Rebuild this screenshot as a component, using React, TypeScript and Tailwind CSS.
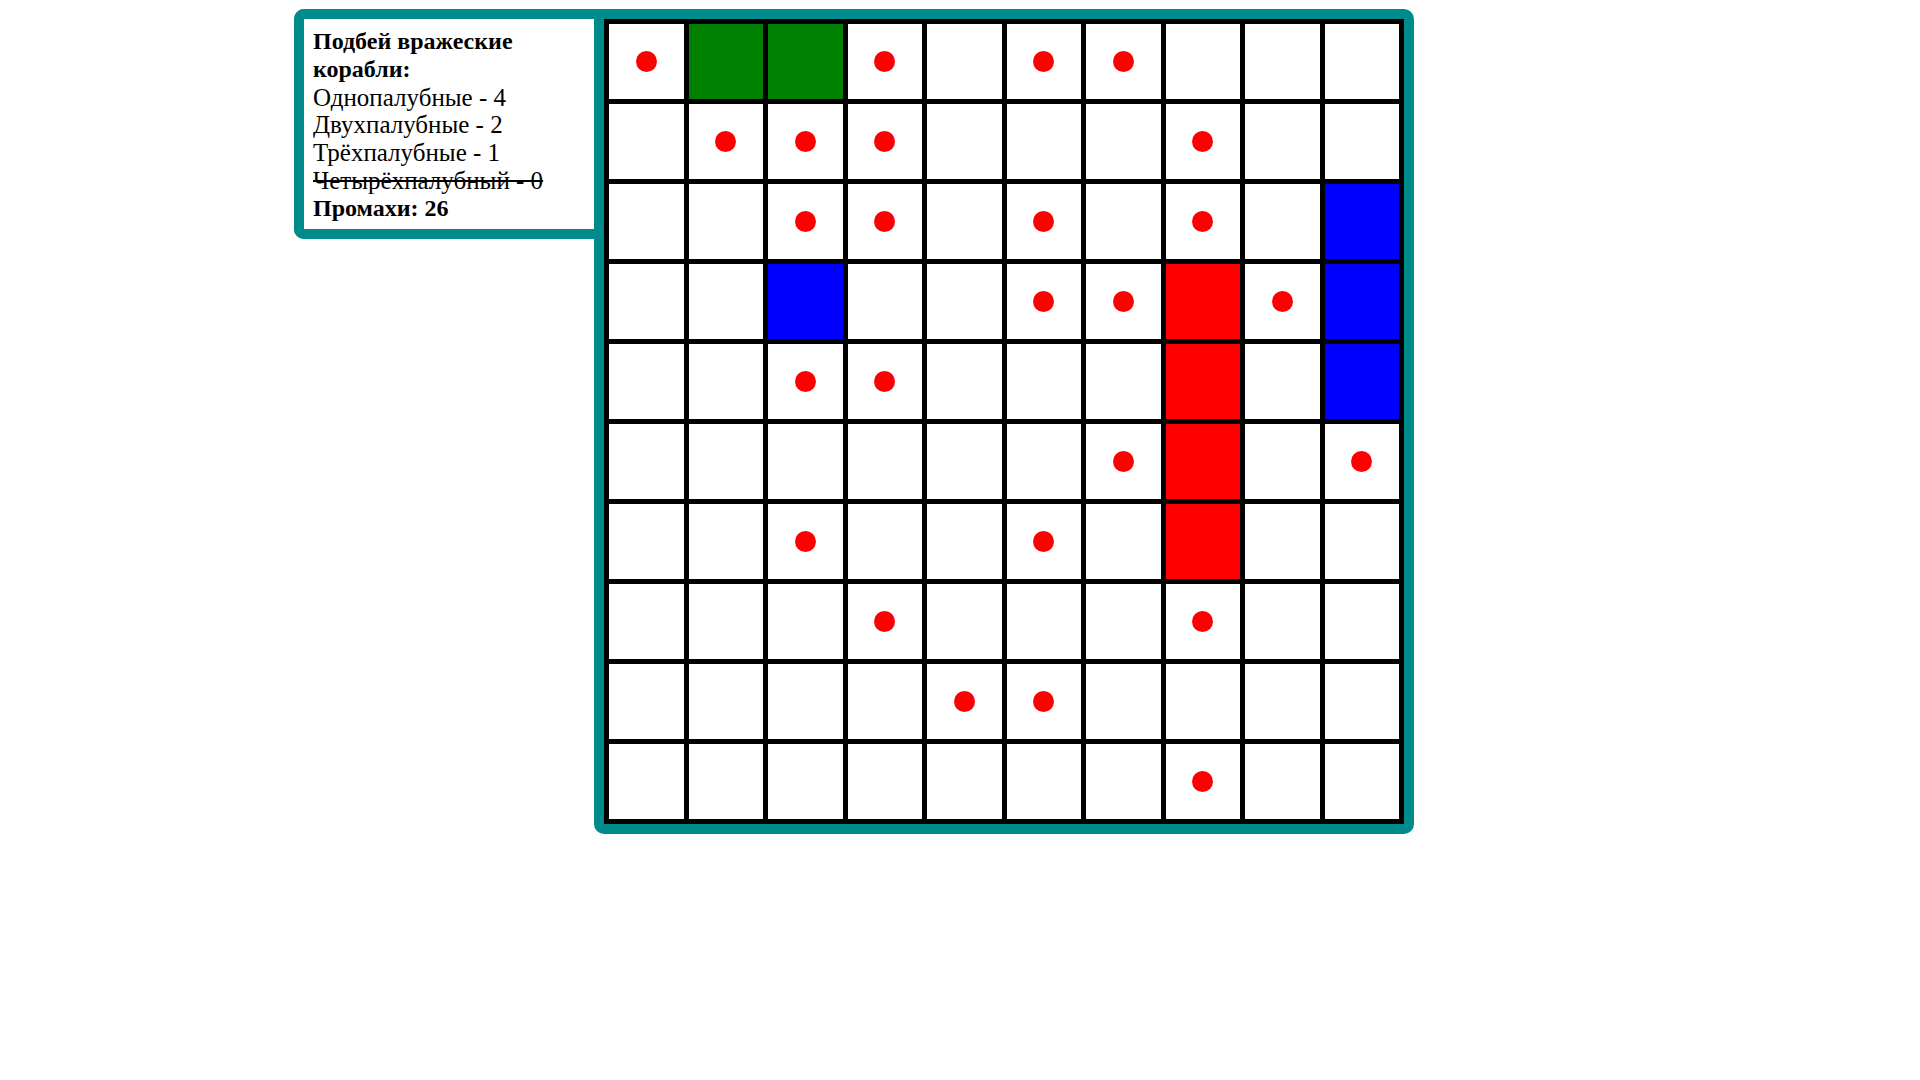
import React from "react"

// 0 пусто, 1 промах, 2 подбит (зелёный), 3 корабль (синий), 4 потоплен (красный)
const board: number[][] = [
  [1, 2, 2, 1, 0, 1, 1, 0, 0, 0],
  [0, 1, 1, 1, 0, 0, 0, 1, 0, 0],
  [0, 0, 1, 1, 0, 1, 0, 1, 0, 3],
  [0, 0, 3, 0, 0, 1, 1, 4, 1, 3],
  [0, 0, 1, 1, 0, 0, 0, 4, 0, 3],
  [0, 0, 0, 0, 0, 0, 1, 4, 0, 1],
  [0, 0, 1, 0, 0, 1, 0, 4, 0, 0],
  [0, 0, 0, 1, 0, 0, 0, 1, 0, 0],
  [0, 0, 0, 0, 1, 1, 0, 0, 0, 0],
  [0, 0, 0, 0, 0, 0, 0, 1, 0, 0],
]

const cellColor: Record<number, string> = {
  0: "bg-white",
  1: "bg-white",
  2: "bg-[#008000]",
  3: "bg-[#0000ff]",
  4: "bg-[#ff0000]",
}

function Cell({ v }: { v: number }) {
  return (
    <div className={`${cellColor[v]} flex items-center justify-center`}>
      {v === 1 && <div className="w-[21px] h-[21px] rounded-full bg-[#ff0000]" />}
    </div>
  )
}

export default function App() {
  const misses = board.flat().filter((v) => v === 1).length

  return (
    <div className="min-h-[1080px] bg-white" style={{ fontFamily: '"Liberation Serif", "Times New Roman", serif' }}>
      <div className="flex items-start pt-[9px] pl-[294px]">
        <div className="w-[300px] border-[10px] border-r-0 border-[#008b8b] rounded-l-[10px] bg-white pl-[9px] pr-[4px] pt-[9px] pb-[6px] text-[25px] leading-[27.8px] text-black">
          <div className="font-bold text-[24px]">Подбей вражеские корабли:</div>
          <div>Однопалубные - 4</div>
          <div>Двухпалубные - 2</div>
          <div>Трёхпалубные - 1</div>
          <div className="line-through">Четырёхпалубный - 0</div>
          <div className="font-bold text-[24px]">Промахи: {misses}</div>
        </div>
        <div className="border-[10px] border-[#008b8b] rounded-tr-[10px] rounded-br-[10px] rounded-bl-[10px]">
          <div className="grid grid-cols-[repeat(10,74.5px)] grid-rows-[repeat(10,75px)] gap-[5px] p-[5px] bg-black">
            {board.map((row, r) => row.map((v, c) => <Cell key={`${r}-${c}`} v={v} />))}
          </div>
        </div>
      </div>
    </div>
  )
}
